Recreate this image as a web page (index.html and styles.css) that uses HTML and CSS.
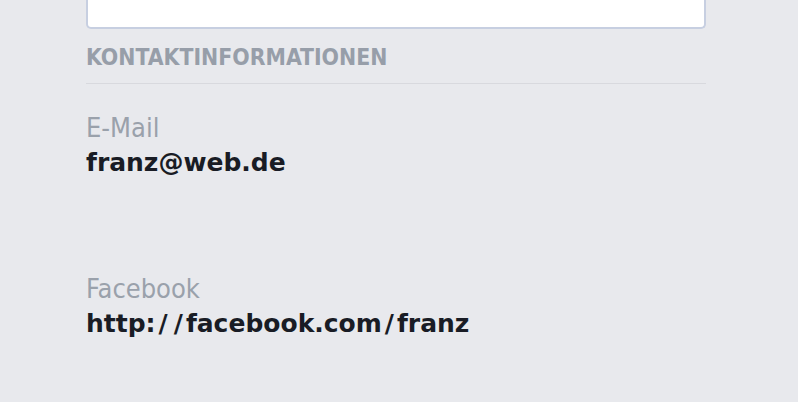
FILE: index.html
```html
<!DOCTYPE html>
<html lang="de">
<head>
<meta charset="utf-8">
<link rel="stylesheet" href="styles.css">
</head>
<body>
<div class="page">
  <div class="card"></div>
  <h2 class="section-title">KONTAKTINFORMATIONEN</h2>
  <div class="divider"></div>
  <div class="fields">
    <div class="field">
      <div class="label">E-Mail</div>
      <div class="value">franz@web.de</div>
    </div>
    <div class="field">
      <div class="label">Facebook</div>
      <div class="value">http:<span class="slash">/</span><span class="slash">/</span>facebook.com<span class="slash">/</span>franz</div>
    </div>
  </div>
</div>
</body>
</html>
```

FILE: styles.css
```css
html, body {
  margin: 0;
  padding: 0;
  background: #e8e9ed;
  font-family: "DejaVu Sans", Verdana, sans-serif;
}
.page {
  width: 620px;
  margin-left: 86px;
  display: flex;
  flex-direction: column;
}
.card {
  height: 27px;
  background: #fff;
  border: 2px solid #c7cfe1;
  border-top: 0;
  border-radius: 0 0 5px 5px;
}
.section-title {
  margin: 17px 0 0;
  font-family: "DejaVu Sans Condensed", "DejaVu Sans", sans-serif;
  font-size: 22.8px;
  line-height: 23px;
  font-weight: bold;
  color: #979ea9;
}
.divider {
  margin-top: 14px;
  height: 1px;
  background: #d8d9de;
}
.fields {
  display: flex;
  flex-direction: column;
  gap: 91px;
  margin-top: 28px;
}
.field {
  display: flex;
  flex-direction: column;
}
.label {
  font-family: "DejaVu Sans Condensed", "DejaVu Sans", sans-serif;
  font-size: 27px;
  line-height: 32px;
  color: #9aa1ab;
}
.value {
  font-size: 25px;
  line-height: 38px;
  font-weight: bold;
  color: #191c25;
}
.slash {
  margin: 0 3px;
}
```
